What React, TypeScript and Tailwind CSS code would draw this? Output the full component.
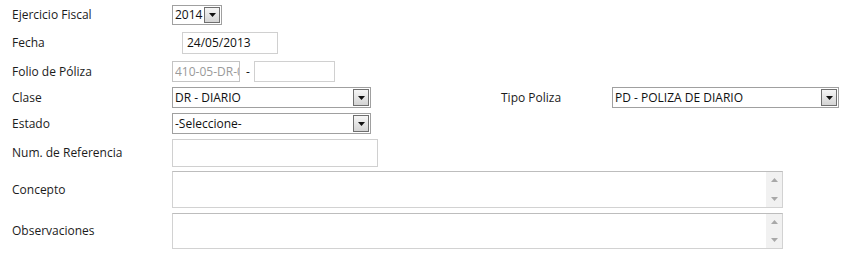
import React from "react";

const font = { fontFamily: '"Segoe UI", "Open Sans", "Noto Sans", sans-serif' };

function Arrow() {
  return (
    <div className="my-[1px] mr-[1px] flex w-[16px] items-center justify-center self-stretch border border-[#6f6f6f] bg-gradient-to-b from-[#f6f6f6] to-[#d4d4d4]">
      <svg width="7" height="4" viewBox="0 0 7 4">
        <polygon points="0,0 7,0 3.5,4" fill="#111" />
      </svg>
    </div>
  );
}

function Select({ text, className }: { text: string; className: string }) {
  return (
    <div className={`flex items-stretch border border-[#a0a0a0] bg-white ${className}`}>
      <div className="flex flex-1 items-center overflow-hidden whitespace-nowrap pl-[2px] text-[12px] text-[#111]">{text}</div>
      <Arrow />
    </div>
  );
}

function TextArea({ className }: { className: string }) {
  return (
    <div className={`flex border border-[#d2d2d2] border-t-[#bdbdbd] bg-white ${className}`}>
      <div className="flex-1" />
      <div className="flex w-[16px] flex-col items-center justify-between bg-[#f1f1f1] py-[6px]">
        <svg width="7" height="4" viewBox="0 0 7 4">
          <polygon points="3.5,0 7,4 0,4" fill="#a8a8a8" />
        </svg>
        <svg width="7" height="4" viewBox="0 0 7 4">
          <polygon points="0,0 7,0 3.5,4" fill="#a8a8a8" />
        </svg>
      </div>
    </div>
  );
}

function Label({ children, className = "" }: { children: React.ReactNode; className?: string }) {
  return <div className={`w-[160px] shrink-0 text-[12px] text-[#1b1b1b] ${className}`}>{children}</div>;
}

export default function App() {
  return (
    <div className="h-[255px] w-[845px] bg-white pl-[12px] pt-[5px]" style={font}>
      <div className="flex h-[20px] items-center">
        <Label>Ejercicio Fiscal</Label>
        <Select text="2014" className="h-[20px] w-[50px]" />
      </div>
      <div className="mt-[7px] flex h-[22px] items-center">
        <Label>Fecha</Label>
        <div className="ml-[10px] flex h-[22px] w-[96px] items-center border border-[#d0d0d0] pl-[4px] text-[12px] text-[#111]">
          24/05/2013
        </div>
      </div>
      <div className="mt-[7px] flex h-[21px] items-center">
        <Label>Folio de Póliza</Label>
        <input
          readOnly
          value="410-05-DR-0001"
          className="h-[21px] w-[68px] border border-[#c4c4c4] bg-white pl-[2px] text-[12px] text-[#9a9a9a] outline-none"
          style={font}
        />
        <span className="ml-[6px] text-[12px] text-[#111]">-</span>
        <input readOnly className="ml-[4px] h-[21px] w-[81px] border border-[#d0d0d0] bg-white outline-none" />
      </div>
      <div className="mt-[5px] flex h-[21px] items-center">
        <Label>Clase</Label>
        <Select text="DR - DIARIO" className="h-[21px] w-[199px]" />
        <div className="ml-[130px] w-[111px] shrink-0 text-[12px] text-[#1b1b1b]">Tipo Poliza</div>
        <Select text="PD - POLIZA DE DIARIO" className="h-[21px] w-[227px]" />
      </div>
      <div className="mt-[5px] flex h-[21px] items-center">
        <Label>Estado</Label>
        <Select text="-Seleccione-" className="h-[21px] w-[199px]" />
      </div>
      <div className="mt-[5px] flex h-[28px] items-center">
        <Label>Num. de Referencia</Label>
        <div className="h-[28px] w-[206px] border border-[#d0d0d0]" />
      </div>
      <div className="mt-[4px] flex h-[37px] items-center">
        <Label>Concepto</Label>
        <TextArea className="h-[37px] w-[611px]" />
      </div>
      <div className="mt-[5px] flex h-[36px] items-center">
        <Label>Observaciones</Label>
        <TextArea className="h-[36px] w-[611px]" />
      </div>
    </div>
  );
}
